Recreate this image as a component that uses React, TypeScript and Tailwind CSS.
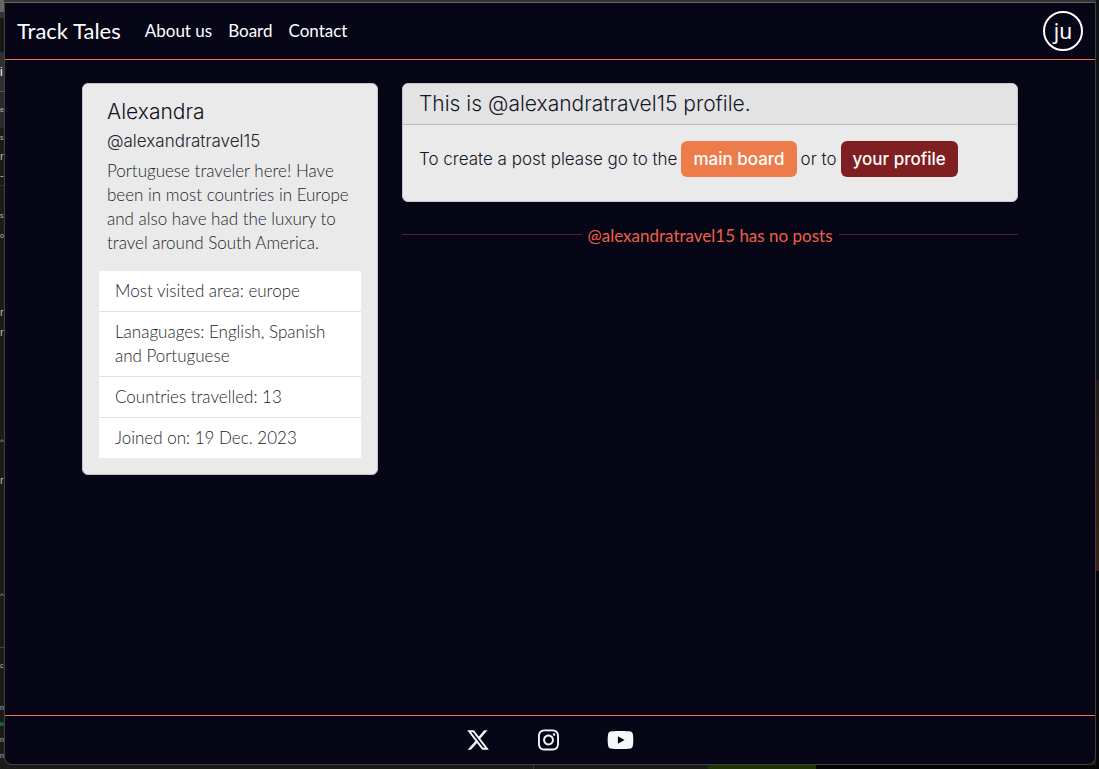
import type { ReactNode } from "react";
import { FaInstagram, FaXTwitter, FaYoutube } from "react-icons/fa6";

const navLinks = ["About us", "Board", "Contact"];

const details = [
  "Most visited area: europe",
  "Lanaguages: English, Spanish and Portuguese",
  "Countries travelled: 13",
  "Joined on: 19 Dec. 2023",
];

const editorRows = [
  { style: "h-3 bg-[#666666]", text: "" },
  { style: "h-1.5 bg-[#333333]", text: "" },
  { style: "h-[34px] bg-[#181817]", text: "" },
  { style: "h-10 border-b border-[#5c5c5c] bg-[#303030] text-xs text-white", text: "i" },
  { style: "h-9 bg-[#2a2a2a] text-[7px]", text: "e" },
  { style: "h-5 text-[7px]", text: "s" },
  { style: "h-4 text-[11px]", text: "r" },
  { style: "h-[22px] border-b border-[#333333] text-[11px]", text: "-" },
  { style: "h-5", text: "" },
  { style: "h-5 text-[7px]", text: "s" },
  { style: "h-5 text-[7px]", text: "o" },
  { style: "h-14", text: "" },
  { style: "h-5 text-[11px]", text: "r" },
  { style: "h-5 text-[11px]", text: "r" },
  { style: "h-[88px]", text: "" },
  { style: "h-6 text-[8px]", text: "^" },
  { style: "h-2.5", text: "" },
  { style: "h-8 text-[11px]", text: "r" },
  { style: "h-[88px]", text: "" },
  { style: "h-6 text-[8px]", text: "^" },
  { style: "h-10 border-b border-[#444444]", text: "" },
  { style: "h-9 text-[7px]", text: "c" },
  { style: "h-4", text: "" },
  { style: "h-4 text-[7px]", text: "n" },
  { style: "h-4 text-[5px] font-bold text-[#18a050]", text: "H" },
  { style: "h-4 text-[7px]", text: "n" },
  { style: "h-4 text-[7px]", text: "n" },
];

function Header() {
  return (
    <header className="flex items-center justify-between border-b border-[#e9784b] px-3 py-2 text-white">
      <div className="flex items-center gap-4">
        <a href="#home" className="text-[22px] leading-8">Track Tales</a>
        <nav className="flex">
          {navLinks.map((label) => (
            <a key={label} href="#nav" className="px-2 text-[17px] leading-6">
              {label}
            </a>
          ))}
        </nav>
      </div>
      <button
        type="button"
        className="flex size-10 items-center justify-center rounded-full border-2 border-white font-['Noto_Sans',sans-serif] text-[21px] leading-6"
      >
        ju
      </button>
    </header>
  );
}

function ProfileCard() {
  return (
    <aside className="w-full rounded-md border border-[#c4c4c8] bg-[#eaeaea] p-4 text-[#23252c] md:w-1/3 md:max-w-[296px]">
      <div className="mb-4 px-2">
        <h1 className="mb-2 font-['Inter',sans-serif] text-[21px] leading-6 font-light text-[#111122]">Alexandra</h1>
        <h2 className="mb-2 font-['Inter',sans-serif] text-[17px] leading-[19px] font-light">@alexandratravel15</h2>
        <p className="text-[17px] leading-6 font-light">
          Portuguese traveler here! Have been in most countries in Europe and also have had the luxury to travel around
          South America.
        </p>
      </div>
      <ul className="divide-y divide-[#dee2e6] bg-white">
        {details.map((detail) => (
          <li key={detail} className="px-4 py-2 text-[17px] leading-6 font-light">
            {detail}
          </li>
        ))}
      </ul>
    </aside>
  );
}

function ButtonLink({ className, children }: { className: string; children: ReactNode }) {
  return (
    <a href="#go" className={`rounded-md px-3 py-1.5 text-[17px] leading-6 font-medium text-white ${className}`}>
      {children}
    </a>
  );
}

function Posts() {
  return (
    <section className="min-w-0 flex-1">
      <div className="rounded-md border border-[#c4c4c8] bg-[#eaeaea] font-['Inter',sans-serif] text-[#15172a]">
        <h2 className="rounded-t-md border-b border-[#b9b9bb] bg-[#e3e3e3] px-4 py-2 text-[21px] leading-6 font-light">
          This is @alexandratravel15 profile.
        </h2>
        <div className="flex flex-wrap items-center gap-1 px-4 pt-4 pb-6 text-[17px] leading-6 font-light">
          <span>To create a post please go to the</span>
          <ButtonLink className="bg-[#ee7c4b]">main board</ButtonLink>
          <span>or to</span>
          <ButtonLink className="bg-[#7f1f21]">your profile</ButtonLink>
        </div>
      </div>
      <div className="mt-[18px] flex items-center gap-1.5 text-[#ee6044]">
        <hr className="flex-1 border-[#552422]" />
        <p className="pt-1 text-[17px] leading-6">@alexandratravel15 has no posts</p>
        <hr className="flex-1 border-[#552422]" />
      </div>
    </section>
  );
}

function Footer() {
  return (
    <footer className="flex h-[49px] items-center justify-center gap-12 border-t border-[#e9784b] text-[#f5f7fa]">
      <a href="#x" aria-label="X"><FaXTwitter className="h-6 w-6" /></a>
      <a href="#instagram" aria-label="Instagram"><FaInstagram className="h-6 w-[21px]" /></a>
      <a href="#youtube" aria-label="YouTube"><FaYoutube className="h-6 w-[27px]" /></a>
    </footer>
  );
}

function EditorEdge() {
  return (
    <div
      aria-hidden="true"
      className="flex w-1 shrink-0 flex-col font-['Liberation_Sans',sans-serif] text-[#b8b8b8]"
    >
      {editorRows.map((row, index) => (
        <div key={index} className={`flex shrink-0 items-center leading-4 ${row.style}`}>
          {row.text}
        </div>
      ))}
    </div>
  );
}

export default function App() {
  return (
    <div className="flex min-h-screen bg-[#1b1b1a] font-['Lato',sans-serif]">
      <EditorEdge />
      <div className="flex min-w-0 flex-1 flex-col">
        <div className="h-0.5 bg-[#333333]" />
        <div className="flex flex-1 flex-col overflow-hidden rounded-b-lg border border-[#404042] border-t-[#66666a] bg-[#070617]">
          <Header />
          <main className="mx-auto flex w-full max-w-[960px] flex-1 flex-col items-start gap-6 px-3 py-[23px] md:flex-row">
            <ProfileCard />
            <Posts />
          </main>
          <Footer />
        </div>
        <div className="flex h-1">
          <div className="w-[530px] border-r border-[#3a3a3a]" />
          <div className="w-[174px]" />
          <div className="w-[108px] bg-[#1e3606]" />
          <div className="flex-1 bg-[#050505]" />
        </div>
      </div>
      <div aria-hidden="true" className="flex w-[3px] shrink-0 flex-col">
        <div className="h-[380px] bg-[#0f1412]" />
        <div className="h-[191px] bg-linear-to-b from-[#241c12] to-[#3c2010]" />
        <div className="flex-1 bg-[#060606]" />
      </div>
    </div>
  );
}
